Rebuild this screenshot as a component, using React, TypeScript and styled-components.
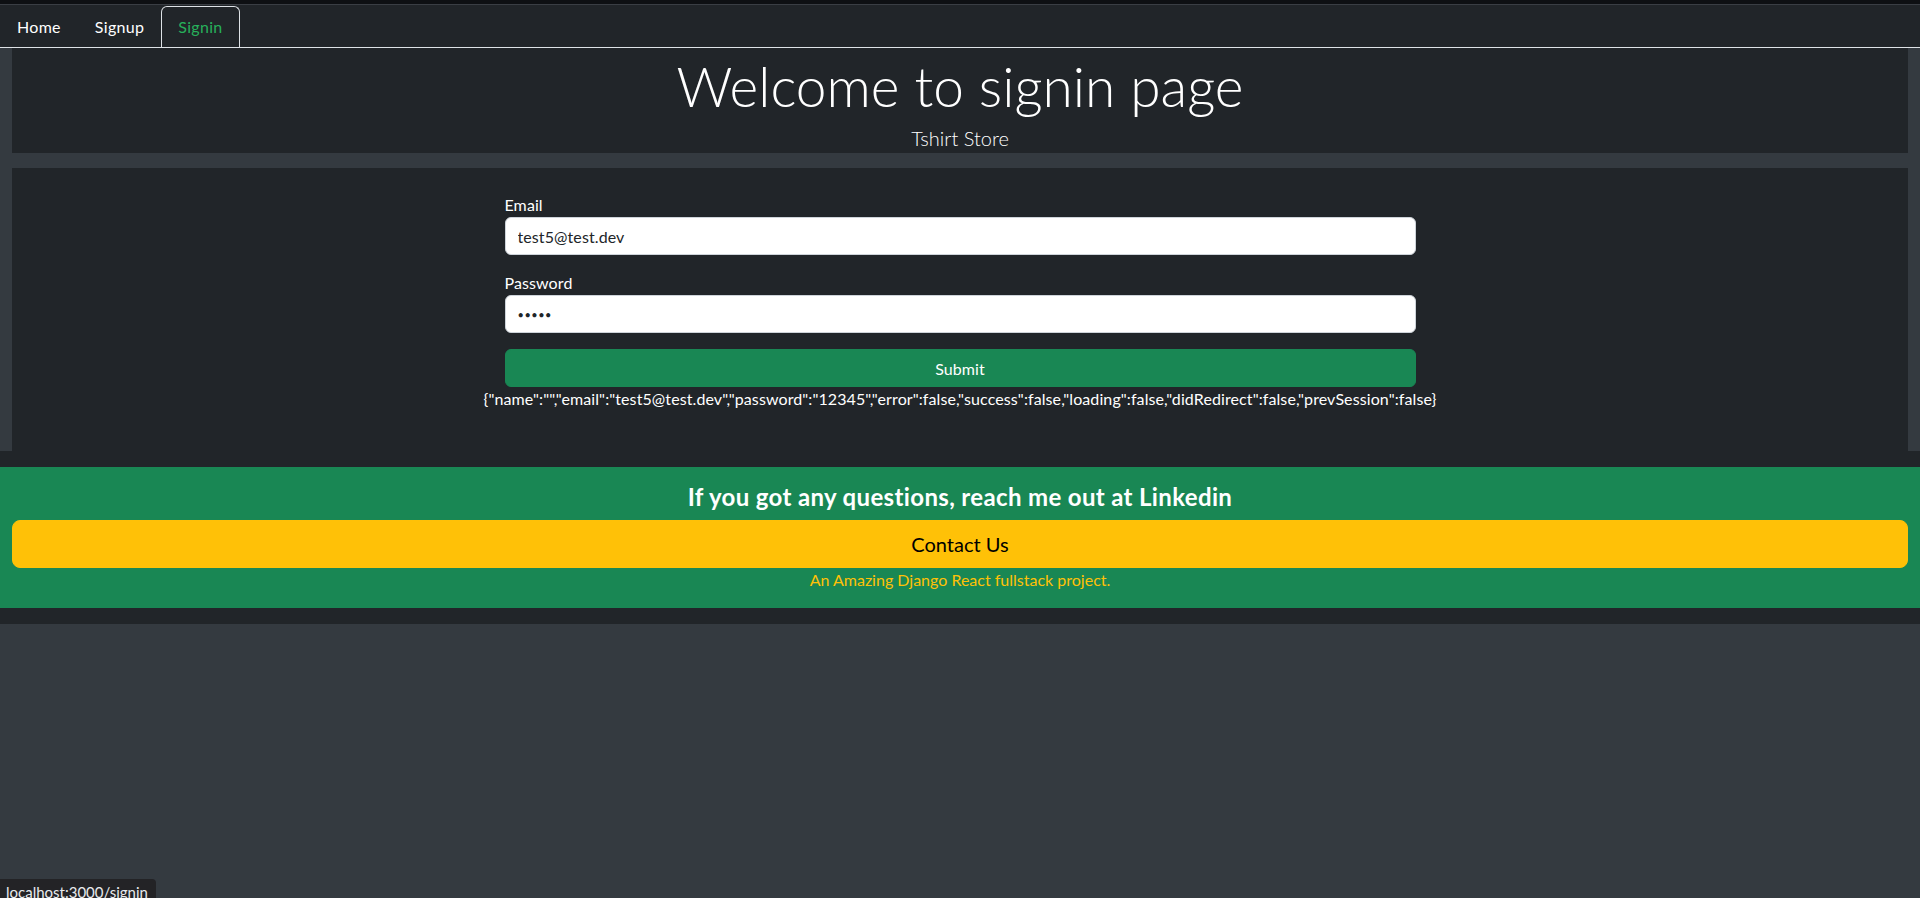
import React from 'react';
import styled, { createGlobalStyle } from 'styled-components';

const GlobalStyle = createGlobalStyle`
  *, *::before, *::after { box-sizing: border-box; }
  html, body { margin: 0; padding: 0; background: #343a40; }
  body {
    font-family: "Lato", "Liberation Sans", sans-serif;
    font-size: 16px;
    line-height: 1.5;
    letter-spacing: 0.1px;
    color: #fff;
    min-height: 100vh;
  }
`;

const TopStrip = styled.div`
  height: 5px;
  background: #0e1013;
  border-bottom: 1px solid #3a3e44;
`;

const NavBar = styled.nav`
  background: #212529;
  padding-top: 1px;
`;

const Tabs = styled.ul`
  display: flex;
  list-style: none;
  margin: 0;
  padding: 0;
  border-bottom: 1px solid #dee2e6;
`;

const TabLink = styled.a<{ $active?: boolean }>`
  display: block;
  padding: 8px 16px;
  border: 1px solid ${(p) => (p.$active ? '#dee2e6' : 'transparent')};
  border-bottom: none;
  border-radius: 6px 6px 0 0;
  color: ${(p) => (p.$active ? '#27b05b' : '#fff')};
  text-decoration: none;
  font-size: 16px;
  line-height: 24px;
  letter-spacing: 0.3px;
`;

const Main = styled.main`
  padding: 0 12px;
`;

const Jumbo = styled.section`
  background: #212529;
  text-align: center;
  padding-top: 5px;
  margin-bottom: 15px;
`;

const Title = styled.h1`
  margin: 0 0 3px;
  font-size: 55px;
  font-weight: 300;
  line-height: 1.22;
  letter-spacing: 0;
`;

const Lead = styled.p`
  margin: 0;
  font-size: 20px;
  font-weight: 300;
  line-height: 30px;
  letter-spacing: 0;
`;

const FormPanel = styled.section`
  background: #212529;
  padding: 25px 0 40px;
  text-align: center;
`;

const FormCol = styled.form`
  width: 911px;
  margin: 0 auto;
  text-align: left;
`;

const Group = styled.div`
  margin-bottom: 16px;
`;

const Label = styled.label`
  display: block;
  font-size: 16px;
  line-height: 24px;
  color: #fff;
`;

const Input = styled.input<{ $secret?: boolean }>`
  display: block;
  width: 100%;
  height: 38px;
  padding: 6px 12px;
  font-family: inherit;
  font-size: ${(p) => (p.$secret ? '11px' : '16px')};
  letter-spacing: ${(p) => (p.$secret ? '0.5px' : '0.1px')};
  color: #212529;
  background: #fff;
  border: 1px solid #ced4da;
  border-radius: 6px;
  outline: none;
`;

const SubmitButton = styled.button`
  display: block;
  width: 100%;
  height: 38px;
  padding: 6px 12px;
  font-family: inherit;
  font-size: 16px;
  letter-spacing: 0.1px;
  color: #fff;
  background: #198754;
  border: 1px solid #198754;
  border-radius: 6px;
`;

const StateDump = styled.div`
  line-height: 24px;
  white-space: nowrap;
`;

const Footer = styled.footer`
  background: #212529;
  padding: 16px 0;
`;

const FooterInner = styled.div`
  background: #198754;
  padding: 16px 12px;
  text-align: center;
`;

const FooterHeading = styled.h4`
  margin: 0 0 8px;
  font-size: 24px;
  font-weight: 700;
  line-height: 1.2;
  letter-spacing: 0.35px;
  color: #fff;
`;

const ContactButton = styled.button`
  display: block;
  width: 100%;
  height: 48px;
  padding: 8px 16px;
  font-family: inherit;
  font-size: 20px;
  letter-spacing: 0;
  color: #000;
  background: #ffc107;
  border: 1px solid #ffc107;
  border-radius: 8px;
`;

const Tagline = styled.p`
  margin: 0;
  line-height: 24px;
  letter-spacing: 0;
  color: #ffc107;
`;

const StatusBubble = styled.div`
  position: fixed;
  left: 0;
  top: 879px;
  height: 26px;
  padding: 5px 8px 0 6px;
  background: #232326;
  color: #e8eaed;
  font-size: 15px;
  line-height: 16px;
  letter-spacing: 0;
  border-top-right-radius: 4px;
`;

const state = {
  name: '',
  email: 'test5@test.dev',
  password: '12345',
  error: false,
  success: false,
  loading: false,
  didRedirect: false,
  prevSession: false,
};

export default function App() {
  return (
    <>
      <GlobalStyle />
      <TopStrip />
      <NavBar>
        <Tabs>
          <li><TabLink href="#">Home</TabLink></li>
          <li><TabLink href="#">Signup</TabLink></li>
          <li><TabLink href="#" $active>Signin</TabLink></li>
        </Tabs>
      </NavBar>
      <Main>
        <Jumbo>
          <Title>Welcome to signin page</Title>
          <Lead>Tshirt Store</Lead>
        </Jumbo>
        <FormPanel>
          <FormCol onSubmit={(e) => e.preventDefault()}>
            <Group>
              <Label>Email</Label>
              <Input type="email" value={state.email} readOnly />
            </Group>
            <Group>
              <Label>Password</Label>
              <Input type="password" value={state.password} $secret readOnly />
            </Group>
            <SubmitButton type="submit">Submit</SubmitButton>
          </FormCol>
          <StateDump>{JSON.stringify(state)}</StateDump>
        </FormPanel>
      </Main>
      <Footer>
        <FooterInner>
          <FooterHeading>If you got any questions, reach me out at Linkedin</FooterHeading>
          <ContactButton type="button">Contact Us</ContactButton>
          <Tagline>An Amazing Django React fullstack project.</Tagline>
        </FooterInner>
      </Footer>
      <StatusBubble>localhost:3000/signin</StatusBubble>
    </>
  );
}
